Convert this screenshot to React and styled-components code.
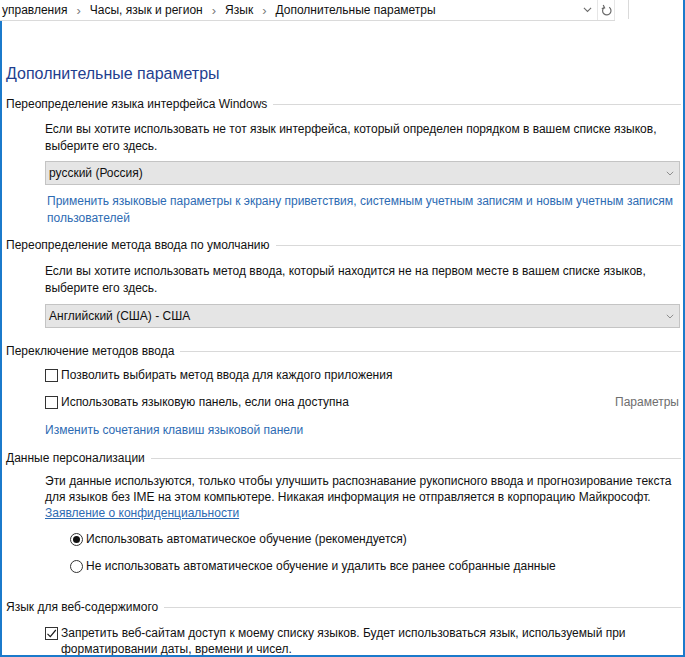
import styled, { createGlobalStyle } from "styled-components";

const GlobalStyle = createGlobalStyle`
    html, body {
        margin: 0;
        padding: 0;
        background: #fff;
    }
    body {
        font-family: "Liberation Sans", Arial, sans-serif;
        font-size: 12px;
        color: #1a1a1a;
    }
`

const crumbs = ['управления', 'Часы, язык и регион', 'Язык', 'Дополнительные параметры']

const ChevronIcon = ({ size = 9, color = '#6b6b6b' }) => (
    <svg width={size} height={size * 0.6} viewBox="0 0 10 6">
        <path d="M1 1 L5 5 L9 1" fill="none" stroke={color} strokeWidth="1.2" />
    </svg>
)

const RefreshIcon = () => (
    <svg width="11" height="13" viewBox="0 0 11 13">
        <path d="M3 3.6 A4.2 4.2 0 1 0 8.2 3.3" fill="none" stroke="#6a6a6a" strokeWidth="1.2" />
        <path d="M2.2 1 L3.6 3.8 L0.8 4.6" fill="none" stroke="#6a6a6a" strokeWidth="1.2" />
    </svg>
)

const CheckMark = () => (
    <svg width="11" height="11" viewBox="0 0 11 11">
        <path d="M1.5 5.8 L4.3 8.6 L9.8 2" fill="none" stroke="#1a1a1a" strokeWidth="1.2" />
    </svg>
)

const App = () => {
    return (
        <>
            <GlobalStyle />
            <Frame>
                <AddressBar>
                    <AddressBox>
                        <Breadcrumb>
                            {crumbs.map((c, i) => (
                                <Crumb key={c}>
                                    {i > 0 && <CrumbSep>›</CrumbSep>}
                                    {c}
                                </Crumb>
                            ))}
                        </Breadcrumb>
                        <DropButton><ChevronIcon /></DropButton>
                        <RefreshButton><RefreshIcon /></RefreshButton>
                    </AddressBox>
                    <SearchBox />
                </AddressBar>

                <Content>
                    <PageTitle>Дополнительные параметры</PageTitle>

                    <SectionHeader $mt={10}>
                        <HeaderText>Переопределение языка интерфейса Windows</HeaderText>
                        <HeaderLine />
                    </SectionHeader>
                    <Indent>
                        <Para $mt={8}>
                            Если вы хотите использовать не тот язык интерфейса, который определен порядком в вашем списке языков, выберите его здесь.
                        </Para>
                        <Select $mt={6}>
                            <span>русский (Россия)</span>
                            <ChevronIcon size={8} color="#8a8a8a" />
                        </Select>
                        <Link $mt={8} $pl={2}>
                            Применить языковые параметры к экрану приветствия, системным учетным записям и новым учетным записям пользователей
                        </Link>
                    </Indent>

                    <SectionHeader $mt={9}>
                        <HeaderText>Переопределение метода ввода по умолчанию</HeaderText>
                        <HeaderLine />
                    </SectionHeader>
                    <Indent>
                        <Para $mt={9}>
                            Если вы хотите использовать метод ввода, который находится не на первом месте в вашем списке языков, выберите его здесь.
                        </Para>
                        <Select $mt={7}>
                            <span>Английский (США) - США</span>
                            <ChevronIcon size={8} color="#8a8a8a" />
                        </Select>
                    </Indent>

                    <SectionHeader $mt={14}>
                        <HeaderText>Переключение методов ввода</HeaderText>
                        <HeaderLine />
                    </SectionHeader>
                    <Indent>
                        <OptionRow $mt={6}>
                            <CheckBox />
                            <OptionText>Позволить выбирать метод ввода для каждого приложения</OptionText>
                        </OptionRow>
                        <OptionRow $mt={9}>
                            <CheckBox />
                            <OptionText>Использовать языковую панель, если она доступна</OptionText>
                            <MutedAction>Параметры</MutedAction>
                        </OptionRow>
                        <Link $mt={11}>Изменить сочетания клавиш языковой панели</Link>
                    </Indent>

                    <SectionHeader $mt={10}>
                        <HeaderText>Данные персонализации</HeaderText>
                        <HeaderLine />
                    </SectionHeader>
                    <Indent>
                        <Para $mt={6} $lh={16}>
                            Эти данные используются, только чтобы улучшить распознавание рукописного ввода и прогнозирование текста для языков без IME на этом компьютере. Никакая информация не отправляется в корпорацию Майкрософт.
                            <br />
                            <UnderLink>Заявление о конфиденциальности</UnderLink>
                        </Para>
                        <RadioGroup>
                            <OptionRow $mt={9}>
                                <Radio $checked />
                                <OptionText>Использовать автоматическое обучение (рекомендуется)</OptionText>
                            </OptionRow>
                            <OptionRow $mt={9}>
                                <Radio />
                                <OptionText>Не использовать автоматическое обучение и удалить все ранее собранные данные</OptionText>
                            </OptionRow>
                        </RadioGroup>
                    </Indent>

                    <SectionHeader $mt={23}>
                        <HeaderText>Язык для веб-содержимого</HeaderText>
                        <HeaderLine />
                    </SectionHeader>
                    <Indent>
                        <OptionRow $mt={9} $top>
                            <CheckBox><CheckMark /></CheckBox>
                            <OptionText $lh={16}>
                                Запретить веб-сайтам доступ к моему списку языков. Будет использоваться язык, используемый при
                                <br />
                                форматировании даты, времени и чисел.
                            </OptionText>
                        </OptionRow>
                    </Indent>
                </Content>
            </Frame>
        </>
    )
}

const Frame = styled.div`
    width: 685px;
    height: 657px;
    box-sizing: border-box;
    border-right: 2px solid #1b7acb;
    border-bottom: 2px solid #1b7acb;
    display: flex;
    flex-direction: column;
    overflow: hidden;
`
const AddressBar = styled.div`
    height: 21px;
    display: flex;
    flex-direction: row;
    align-items: stretch;
    flex-shrink: 0;
`
const AddressBox = styled.div`
    flex: 1;
    display: flex;
    align-items: center;
    border-bottom: 1px solid #dadada;
    margin-right: 13px;
`
const Breadcrumb = styled.div`
    flex: 1;
    display: flex;
    align-items: center;
    padding-left: 2px;
    white-space: nowrap;
    color: #111;
`
const Crumb = styled.span`
    display: flex;
    align-items: center;
`
const CrumbSep = styled.span`
    color: #7a7a7a;
    font-size: 13px;
    margin: 0 9px 0 9px;
`
const DropButton = styled.div`
    width: 20px;
    height: 100%;
    display: flex;
    align-items: center;
    justify-content: center;
`
const RefreshButton = styled.div`
    width: 16px;
    height: 100%;
    display: flex;
    align-items: center;
    justify-content: center;
    border-left: 1px solid #e6e6e6;
    border-right: 1px solid #e6e6e6;
`
const SearchBox = styled.div`
    width: 54px;
    border-left: 1px solid #dadada;
    height: 19px;
`
const Content = styled.div`
    flex: 1;
    border-left: 2px solid #1b7acb;
    padding: 42px 2px 0 4px;
`
const PageTitle = styled.h1`
    margin: 0;
    font-size: 16px;
    line-height: 22px;
    font-weight: 400;
    color: #1f3f8f;
`
const SectionHeader = styled.div`
    display: flex;
    align-items: center;
    margin-top: ${p => p.$mt}px;
    height: 18px;
`
const HeaderText = styled.span`
    color: #111;
    white-space: nowrap;
`
const HeaderLine = styled.div`
    flex: 1;
    height: 1px;
    background: #d9d9d9;
    margin-left: 6px;
`
const Indent = styled.div`
    margin-left: 39px;
    margin-right: 1px;
`
const Para = styled.p`
    margin: ${p => p.$mt}px 0 0 0;
    line-height: ${p => p.$lh || 17}px;
    color: #111;
`
const Select = styled.div`
    margin-top: ${p => p.$mt}px;
    height: 24px;
    box-sizing: border-box;
    background: #e5e5e5;
    border: 1px solid #c4c4c4;
    display: flex;
    align-items: center;
    justify-content: space-between;
    padding: 0 5px 0 3px;
    color: #111;
`
const Link = styled.div`
    margin-top: ${p => p.$mt}px;
    line-height: 17px;
    color: #2d6bb3;
    padding-left: ${p => p.$pl || 0}px;
`
const UnderLink = styled.span`
    color: #2d6bb3;
    text-decoration: underline;
`
const OptionRow = styled.div`
    margin-top: ${p => p.$mt}px;
    display: flex;
    align-items: ${p => (p.$top ? 'flex-start' : 'center')};
    min-height: 18px;
`
const CheckBox = styled.div`
    width: 13px;
    height: 13px;
    box-sizing: border-box;
    border: 1px solid #333;
    flex-shrink: 0;
    display: flex;
    align-items: center;
    justify-content: center;
    margin-top: ${p => (p.children ? '2px' : '0')};
`
const Radio = styled.div`
    width: 13px;
    height: 13px;
    box-sizing: border-box;
    border: 1px solid #333;
    border-radius: 50%;
    flex-shrink: 0;
    position: relative;

    &::after {
        content: '';
        display: ${p => (p.$checked ? 'block' : 'none')};
        position: absolute;
        inset: 2px;
        border-radius: 50%;
        background: #111;
    }
`
const OptionText = styled.span`
    margin-left: 3px;
    color: #111;
    line-height: ${p => p.$lh || 18}px;
    flex: 1;
`
const MutedAction = styled.span`
    color: #6e6e6e;
    margin-right: 1px;
`
const RadioGroup = styled.div`
    margin-left: 25px;
`

export default App
